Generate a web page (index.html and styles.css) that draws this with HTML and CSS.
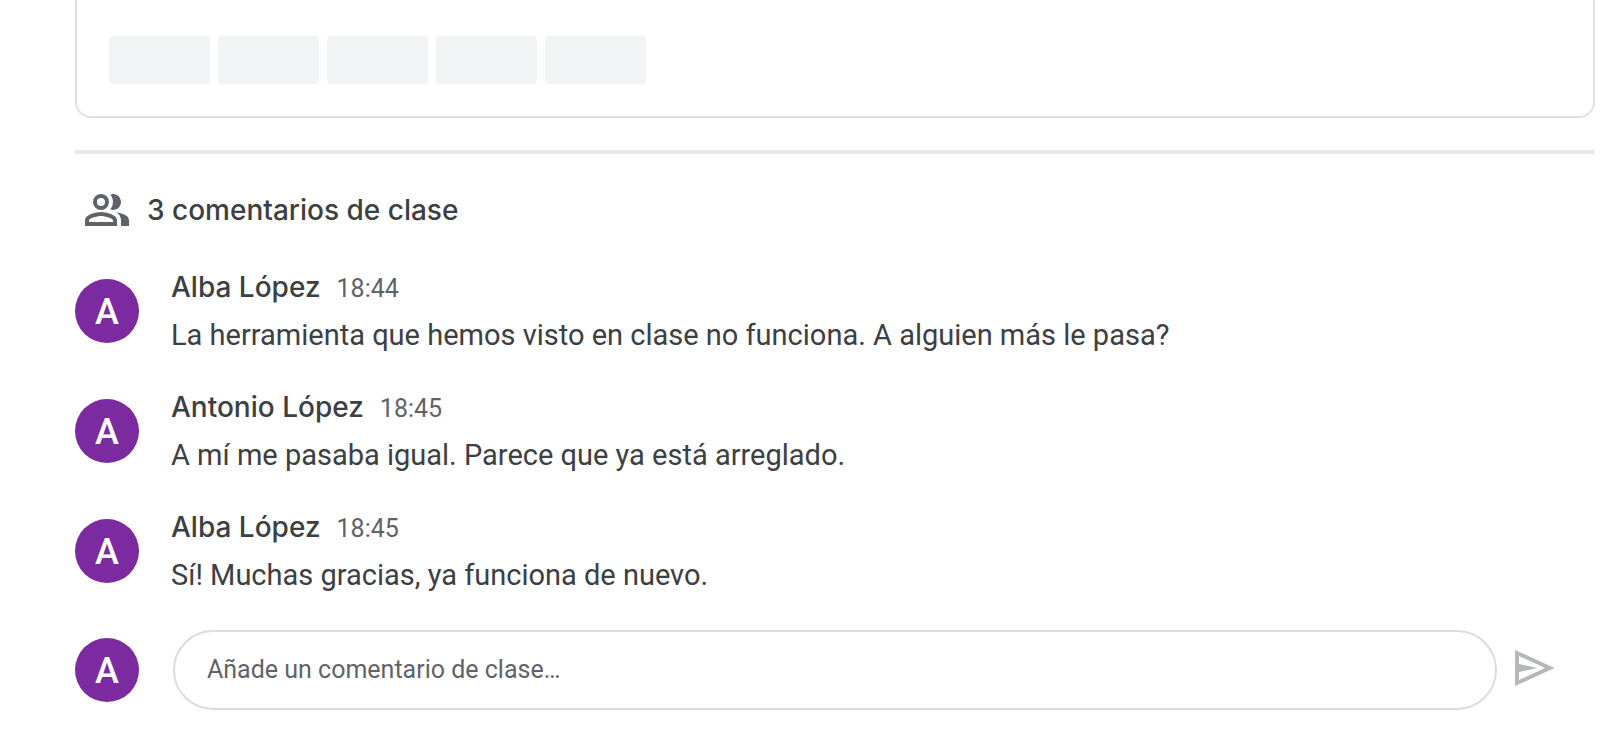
FILE: index.html
```
<!DOCTYPE html>
<html lang="es">
<head>
    <meta charset="UTF-8">
    <meta name="viewport" content="width=device-width, initial-scale=1.0">
    <title>Comentarios de clase</title>
    <link rel="stylesheet" href="styles.css">
</head>
<body>
    <main class="page">
        <section class="card">
            <div class="chip"></div>
            <div class="chip"></div>
            <div class="chip"></div>
            <div class="chip"></div>
            <div class="chip"></div>
        </section>

        <section class="comments">
            <h2 class="comments-title">
                <svg class="people-icon" viewBox="0 0 24 24" aria-hidden="true">
                    <path fill-rule="evenodd" d="M9 4a4 4 0 1 0 0 8 4 4 0 0 0 0-8zm0 2a2 2 0 1 1 0 4 2 2 0 0 1 0-4z"/>
                    <path d="M15 8c0-1.42-.5-2.73-1.33-3.76.42-.14.86-.24 1.33-.24 2.21 0 4 1.79 4 4s-1.79 4-4 4c-.47 0-.91-.1-1.33-.24A5.98 5.98 0 0 0 15 8z"/>
                    <path d="M16.66 13.13C18.03 14.06 19 15.32 19 17v3h4v-3c0-2.18-3.58-3.47-6.34-3.87z"/>
                    <path fill-rule="evenodd" d="M9 13c-2.67 0-8 1.34-8 4v3h16v-3c0-2.66-5.33-4-8-4zm6 5H3v-.99C3.2 16.29 6.7 15 9 15s5.8 1.29 6 2.01V18z"/>
                </svg>
                3 comentarios de clase
            </h2>

            <article class="comment">
                <div class="avatar">A</div>
                <div class="comment-body">
                    <div class="comment-head">
                        <span class="author">Alba López</span>
                        <time class="time">18:44</time>
                    </div>
                    <p class="text">La herramienta que hemos visto en clase no funciona. A alguien más le pasa?</p>
                </div>
            </article>

            <article class="comment">
                <div class="avatar">A</div>
                <div class="comment-body">
                    <div class="comment-head">
                        <span class="author">Antonio López</span>
                        <time class="time">18:45</time>
                    </div>
                    <p class="text">A mí me pasaba igual. Parece que ya está arreglado.</p>
                </div>
            </article>

            <article class="comment">
                <div class="avatar">A</div>
                <div class="comment-body">
                    <div class="comment-head">
                        <span class="author">Alba López</span>
                        <time class="time">18:45</time>
                    </div>
                    <p class="text">Sí! Muchas gracias, ya funciona de nuevo.</p>
                </div>
            </article>

            <form class="composer">
                <div class="avatar">A</div>
                <input class="composer-input" type="text" placeholder="Añade un comentario de clase…" aria-label="Añade un comentario de clase">
                <button class="send-button" type="button" aria-label="Publicar">
                    <svg class="send-icon" viewBox="0 0 40 36" aria-hidden="true">
                        <path fill-rule="evenodd" d="M0 0l39.5 18L0 36zM4 6v24l26-12z"/>
                        <path d="M4 14L22 18 4 22z"/>
                    </svg>
                </button>
            </form>
        </section>
    </main>
</body>
</html>
```
FILE: styles.css
```
* {
    margin: 0;
    padding: 0;
    box-sizing: border-box;
}

body {
    background-color: #fff;
    color: #3c4043;
    font-family: Roboto, Arial, sans-serif;
    font-size: 29px;
    line-height: 40px;
}

.page {
    padding: 0 5px 24px 75px;
}

/* Attachment card, cut off at the top of the view */
.card {
    display: flex;
    gap: 8px;
    padding: 36px 32px 32px;
    border: 2px solid #e0e0e0;
    border-top: none;
    border-radius: 0 0 16px 16px;
}

.chip {
    width: 101px;
    height: 48px;
    border-radius: 4px;
    background-color: #f1f3f4;
}

.comments {
    margin-top: 32px;
    border-top: 4px solid #e8eaed;
    padding-top: 32px;
}

.comments-title {
    display: flex;
    align-items: center;
    gap: 16px;
    height: 48px;
    margin-bottom: 33px;
    padding-left: 8px;
    font-family: Inter, Roboto, sans-serif;
    font-size: 28px;
    font-weight: 500;
}

.people-icon {
    width: 48px;
    height: 48px;
    fill: #5f6368;
}

.comment {
    display: flex;
    align-items: center;
    gap: 32px;
    margin-bottom: 32px;
}

.avatar {
    flex: none;
    width: 64px;
    height: 64px;
    border-radius: 50%;
    background-color: #7b2a9f;
    color: #fff;
    font-size: 36px;
    font-weight: 500;
    line-height: 66px;
    text-align: center;
}

.comment-body {
    flex: 1;
}

.comment-head {
    display: flex;
    align-items: baseline;
    gap: 16px;
    height: 40px;
    margin-bottom: 8px;
}

.author {
    font-family: Inter, Roboto, sans-serif;
    font-size: 28px;
    font-weight: 500;
}

.time {
    color: #5f6368;
    font-size: 25px;
}

.composer {
    display: flex;
    align-items: center;
    margin-top: 35px;
}

.composer-input {
    flex: 1;
    min-width: 0;
    height: 80px;
    margin-left: 34px;
    padding: 0 32px 2px;
    border: 2px solid #dadce0;
    border-radius: 40px;
    color: #3c4043;
    font-family: inherit;
    font-size: 25px;
    outline: none;
}

.composer-input::placeholder {
    color: #5f6368;
    opacity: 1;
}

.send-button {
    display: flex;
    align-items: center;
    width: 80px;
    height: 80px;
    margin-right: 18px;
    padding: 0 0 4px 18px;
    border: none;
    background: none;
    cursor: pointer;
}

.send-icon {
    width: 40px;
    height: 36px;
    fill: #b5b7b8;
}
```
